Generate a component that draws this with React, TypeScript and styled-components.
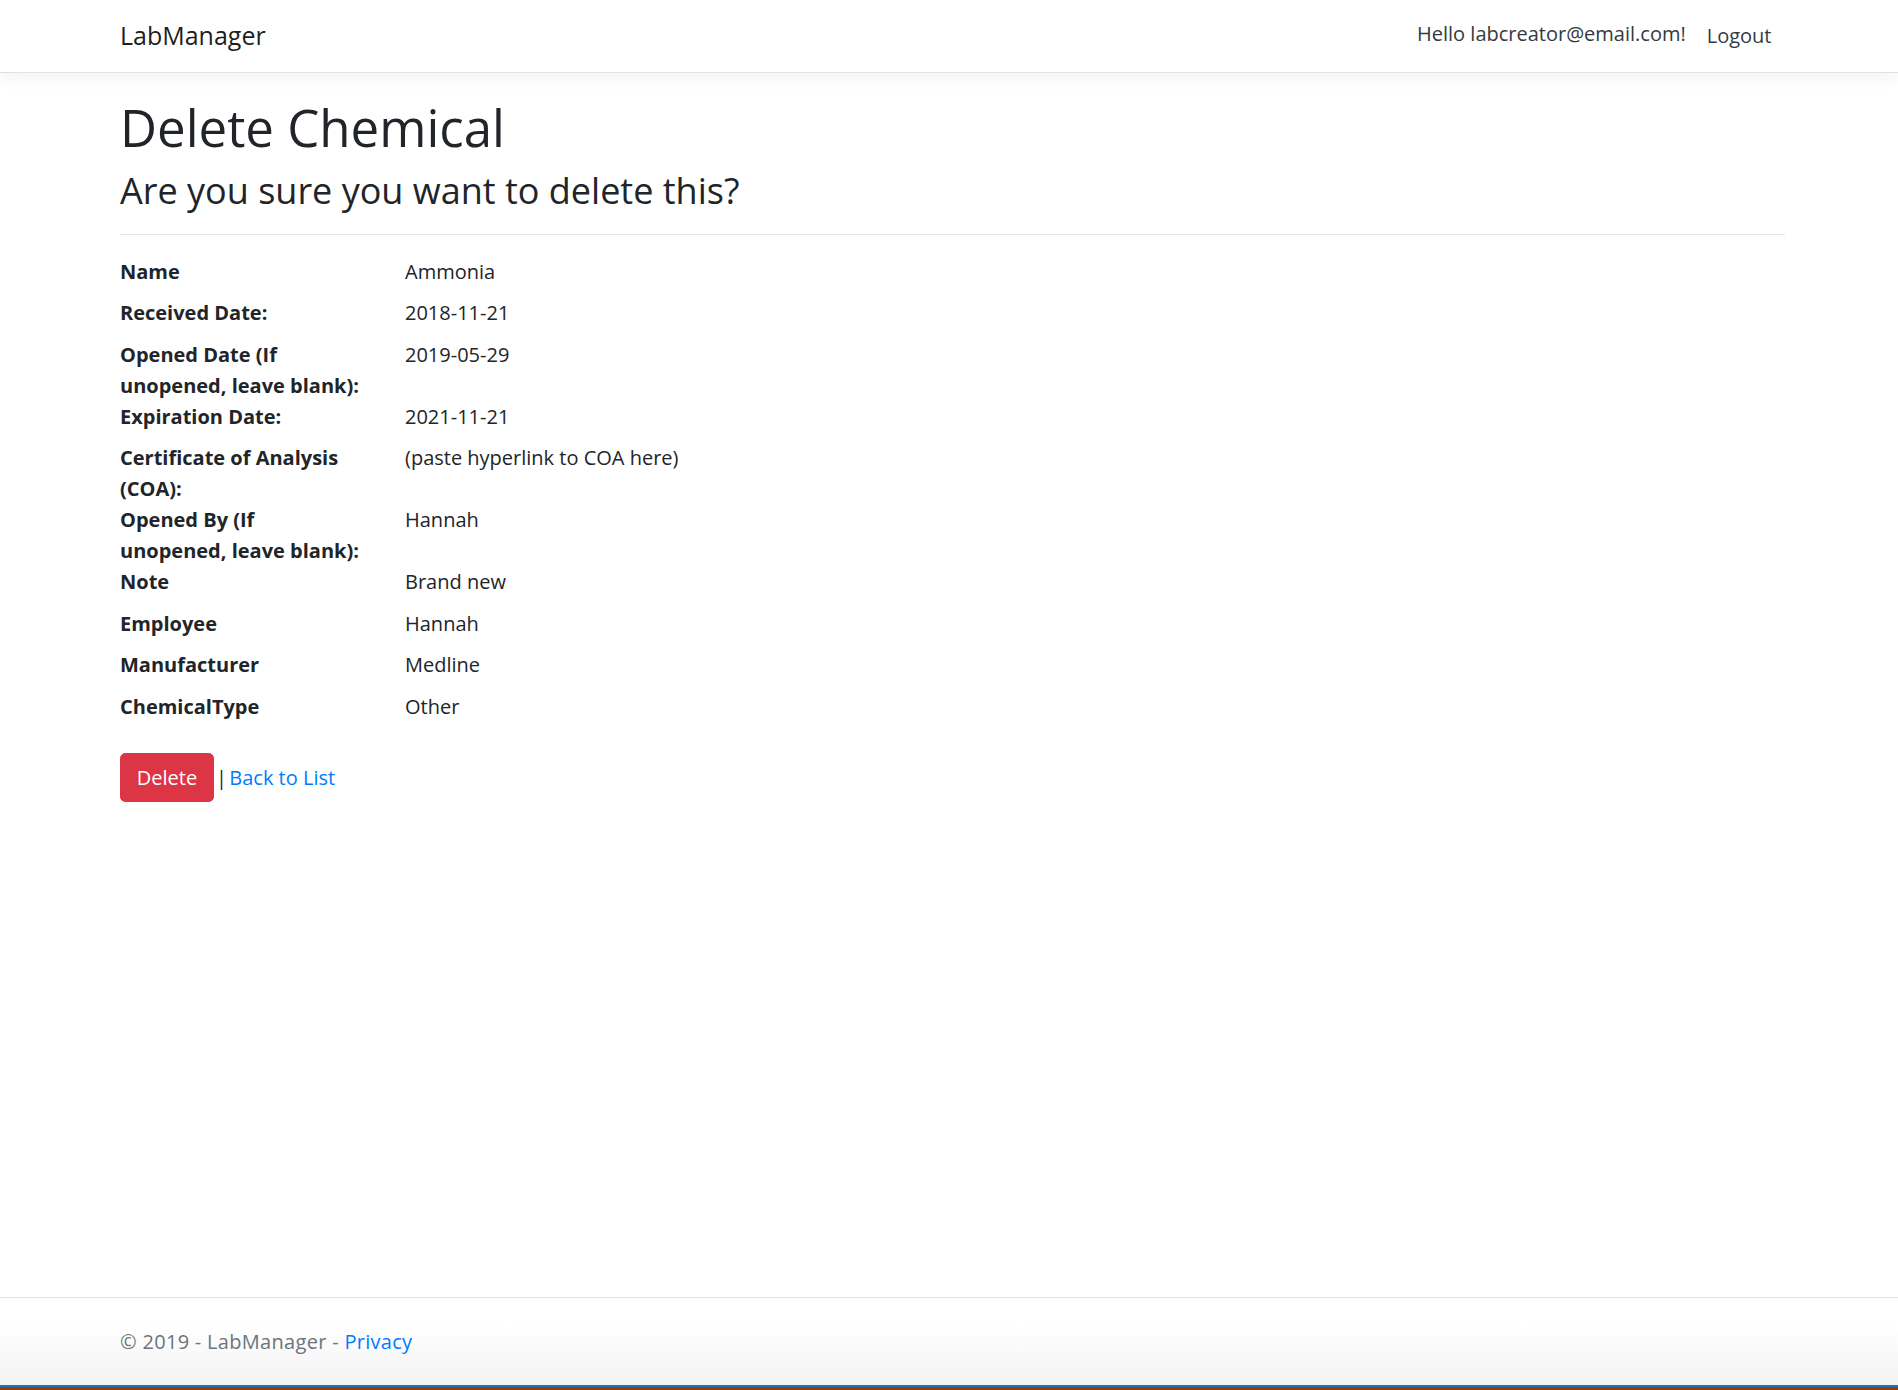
import React from "react";
import styled, {createGlobalStyle} from "styled-components";

const GlobalStyle = createGlobalStyle`
  html, body {
    margin: 0;
    padding: 0;
  }
  body {
    font-family: "Open Sans", "Noto Sans", sans-serif;
    font-size: 20px;
    line-height: 31px;
    color: #212529;
    background: #fff;
  }
  *, *::before, *::after {
    box-sizing: border-box;
  }
`;

const Page = styled.div`
  min-height: 100vh;
  display: flex;
  flex-direction: column;
`;

const Container = styled.div`
  padding: 0 113px 0 120px;
`;

const Navbar = styled.header`
  background: #fff;
  border-bottom: 1px solid #dee2e6;
  box-shadow: 0 5px 16px rgba(0, 0, 0, 0.05);
  margin-bottom: 22px;
`;

const NavRow = styled(Container)`
  height: 72px;
  display: flex;
  align-items: center;
  justify-content: space-between;
`;

const Brand = styled.a`
  font-size: 25px;
  line-height: 39px;
  color: rgba(0, 0, 0, 0.9);
  text-decoration: none;
  margin-top: -1px;
`;

const NavLinks = styled.nav`
  display: flex;
  align-items: center;
  margin-right: 3px;
`;

const NavText = styled.span<{ $shift?: number }>`
  color: #343a40;
  padding: 0 10.5px;
  margin-top: ${p => p.$shift ?? 0}px;
`;

const Main = styled(Container)`
  flex: 1;
`;

const Title = styled.h1`
  font-size: 51px;
  font-weight: 500;
  line-height: 65px;
  margin: 0 0 8.5px;
`;

const Subtitle = styled.h3`
  font-size: 36px;
  font-weight: 500;
  line-height: 44px;
  margin: 0 0 10.5px;
`;

const Rule = styled.hr`
  border: 0;
  border-top: 1px solid rgba(0, 0, 0, 0.1);
  margin: 21px 0;
`;

const Details = styled.dl`
  display: grid;
  grid-template-columns: 240px 1fr;
  column-gap: 45px;
  margin: 0 0 21px;
`;

const Term = styled.dt`
  font-weight: 700;
  margin: 0;
`;

const Value = styled.dd`
  margin: 0 0 10.5px;
`;

const Actions = styled.form`
  margin: 0;
`;

const DangerButton = styled.button`
  font-family: inherit;
  font-size: 20px;
  line-height: 31.5px;
  color: #fff;
  background: #dc3545;
  border: 1px solid #dc3545;
  border-radius: 5.25px;
  padding: 7.875px 15.75px;
  cursor: pointer;
`;

const Separator = styled.span`
  word-spacing: -3px;
`;

const Link = styled.a`
  color: #007bff;
  text-decoration: none;
`;

const Footer = styled.footer`
  border-top: 1px solid #dee2e6;
  line-height: 87px;
  color: #6c757d;
  white-space: nowrap;
  letter-spacing: 0.3px;
  background: linear-gradient(#fff 0%, #fff 30%, #f3f3f3 100%);
`;

const TaskbarEdge = styled.div`
  height: 5px;
  border-top: 2px solid #1a73c9;
  background: #9b3d00;
`;

const rows: [string, string][] = [
    ["Name", "Ammonia"],
    ["Received Date:", "2018-11-21"],
    ["Opened Date (If unopened, leave blank):", "2019-05-29"],
    ["Expiration Date:", "2021-11-21"],
    ["Certificate of Analysis (COA):", "(paste hyperlink to COA here)"],
    ["Opened By (If unopened, leave blank):", "Hannah"],
    ["Note", "Brand new"],
    ["Employee", "Hannah"],
    ["Manufacturer", "Medline"],
    ["ChemicalType", "Other"],
];

const App = () => {
    return <Page>
        <GlobalStyle/>
        <Navbar>
            <NavRow>
                <Brand href="#">LabManager</Brand>
                <NavLinks>
                    <NavText $shift={-5}>Hello labcreator@email.com!</NavText>
                    <NavText $shift={-2}>Logout</NavText>
                </NavLinks>
            </NavRow>
        </Navbar>
        <Main>
            <Title>Delete Chemical</Title>
            <Subtitle>Are you sure you want to delete this?</Subtitle>
            <div>
                <Rule/>
                <Details>
                    {rows.map(([label, value]) => <React.Fragment key={label}>
                        <Term>{label}</Term>
                        <Value>{value}</Value>
                    </React.Fragment>)}
                </Details>
                <Actions onSubmit={e => e.preventDefault()}>
                    <DangerButton type="submit">Delete</DangerButton><Separator> | </Separator><Link href="#">Back to List</Link>
                </Actions>
            </div>
        </Main>
        <Footer>
            <Container>
                &copy; 2019 - LabManager - <Link href="#">Privacy</Link>
            </Container>
        </Footer>
        <TaskbarEdge/>
    </Page>
}

export default App;
